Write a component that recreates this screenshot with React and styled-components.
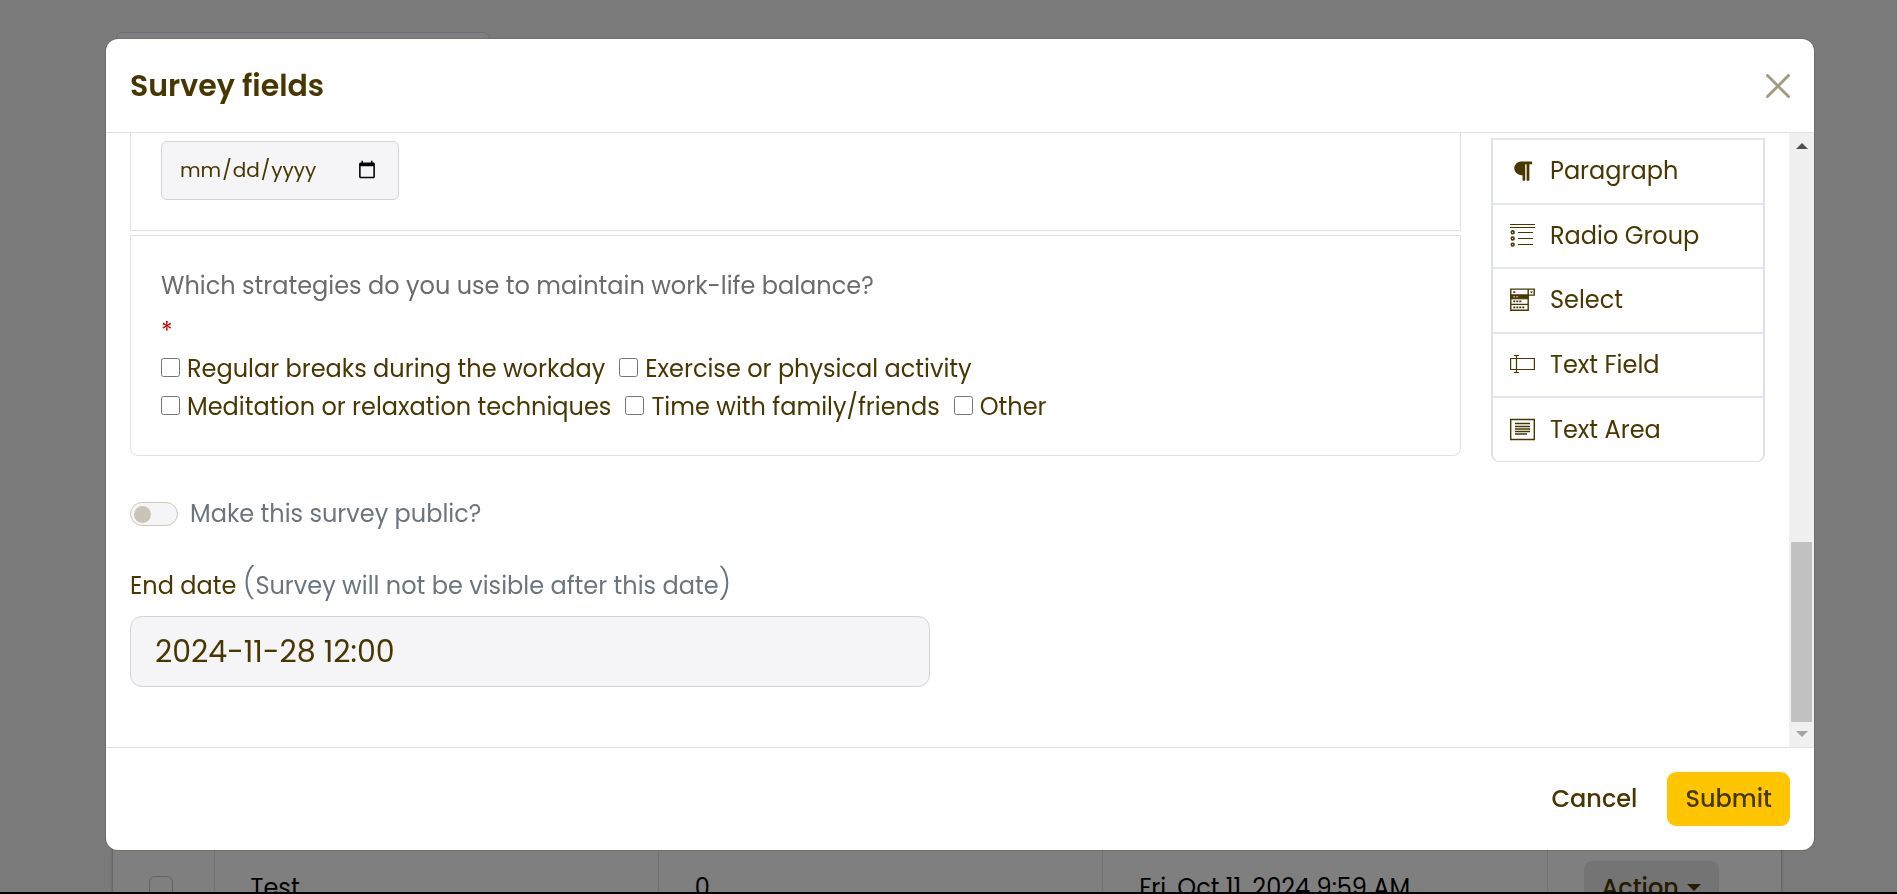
// App.jsx
import React from 'react';
import styled, { createGlobalStyle, css } from 'styled-components';
import { FaParagraph } from 'react-icons/fa';

const GlobalStyle = createGlobalStyle`
  *, *::before, *::after {
    box-sizing: border-box;
  }
  body {
    margin: 0;
    background: #f5f5f5;
    color: #483700;
    font-family: Poppins, Inter, 'Noto Sans', sans-serif;
    font-size: 24px;
    line-height: 36px;
  }
  input, button {
    font: inherit;
    color: inherit;
  }
`;

/* ---- page behind the dialog ---- */

const Page = styled.main`
  display: flex;
  flex-direction: column;
  justify-content: space-between;
  height: 100vh;
  padding: 32px 116px 0 113px;
  overflow: hidden;
`;

const SearchCard = styled.div`
  width: 374px;
  height: 64px;
  margin-left: 3px;
  background: #fff;
  border: 1px solid #dcdfe6;
  border-radius: 6px;
`;

const TableCard = styled.div`
  height: 48px;
  background: #fff;
  box-shadow: 0 0 3px rgba(0, 0, 0, 0.4);
`;

const Table = styled.table`
  width: 100%;
  table-layout: fixed;
  border-collapse: collapse;
  color: #000;
`;

const Cell = styled.td`
  width: ${({ $width }) => $width || 'auto'};
  height: 84px;
  padding: 0 36px;
  border-right: 1px solid #e4e4e4;
  &:last-child {
    border-right: 0;
  }
`;

const RowCheck = styled.input`
  appearance: none;
  display: block;
  width: 24px;
  height: 24px;
  margin: 0;
  border: 1px solid #c8c4b5;
  border-radius: 6px;
`;

const ActionButton = styled.button`
  display: flex;
  align-items: center;
  gap: 8px;
  height: 54px;
  padding: 0 18px;
  background: #e9e9e9;
  border: 0;
  border-radius: 8px;
  color: #483700;
  font-weight: 500;
`;

/* ---- dialog ---- */

const Backdrop = styled.div`
  position: fixed;
  inset: 0;
  display: flex;
  padding: 39px 83px 42px 106px;
  background: rgba(0, 0, 0, 0.5);
  border-bottom: 2px solid #000;
`;

const Dialog = styled.section`
  display: flex;
  flex: 1;
  flex-direction: column;
  min-width: 0;
  overflow: hidden;
  background: #fff;
  border-radius: 12px;
  box-shadow: 0 0 0 1px rgba(72, 55, 0, 0.2);
`;

const Header = styled.header`
  display: flex;
  flex: none;
  align-items: center;
  justify-content: space-between;
  height: 94px;
  padding: 0 24px;
  border-bottom: 1px solid #dee2e6;
`;

const Title = styled.h1`
  margin: 0;
  font-size: 30px;
  font-weight: 600;
`;

const CloseButton = styled.button`
  display: flex;
  padding: 0;
  background: none;
  border: 0;
  color: #a39b7f;
`;

const Body = styled.div`
  display: flex;
  flex: 1;
  min-height: 0;
`;

// Content is pinned to its end, as when scrolled all the way down
const ScrollArea = styled.div`
  display: flex;
  flex: 1;
  flex-direction: column;
  justify-content: flex-end;
  min-width: 0;
  padding: 0 24px 60px;
  overflow: hidden;
`;

const ScrollTrack = styled.div`
  display: flex;
  flex: none;
  flex-direction: column;
  align-items: center;
  justify-content: space-between;
  width: 25px;
  padding: 10px 2px;
  background: #f0f0f0;
`;

const ScrollThumb = styled.div`
  width: 100%;
  height: 180px;
  margin: auto 0 9px;
  background: #c1c1c1;
`;

const Builder = styled.div`
  display: flex;
  flex: none;
  align-items: flex-end;
  gap: 30px;
  margin-bottom: 40px;
`;

const Fields = styled.div`
  display: flex;
  flex: 1;
  flex-direction: column;
  gap: 4px;
  margin-bottom: 6px;
`;

const FieldCard = styled.fieldset`
  margin: 0;
  padding: ${({ $last }) => ($last ? '32px 30px 29px' : '32px 30px 30px')};
  border: 1px solid #dee2e6;
  ${({ $last }) => $last && css`
    border-radius: 0 0 8px 8px;
  `}
`;

const DateInput = styled.input`
  display: block;
  width: 238px;
  height: 59px;
  padding: 0 19px 2px 17px;
  background: #f5f5f8;
  border: 1px solid #ced4da;
  border-radius: 6px;
  font-size: 20px;
`;

const Question = styled.div`
  color: #6b6b6b;
`;

const Required = styled.div`
  height: 46px;
  padding-top: 10px;
  color: #c00;
`;

const Options = styled.div`
  display: flex;
  flex-wrap: wrap;
  max-width: 920px;
  column-gap: 14px;
`;

const Option = styled.label`
  display: flex;
  align-items: center;
  gap: 7px;
  height: 38px;
  input {
    width: 19px;
    height: 19px;
    margin: 0 0 4px;
  }
`;

const Palette = styled.ul`
  display: grid;
  flex: none;
  grid-auto-rows: 1fr;
  width: 274px;
  height: 324px;
  margin: 0;
  padding: 0;
  border: solid #dee2e6;
  border-width: 0 2px 1px;
  border-radius: 0 0 8px 8px;
  list-style: none;
`;

const PaletteItem = styled.li`
  display: flex;
  align-items: center;
  gap: 15px;
  padding: 0 17px;
  border-top: 2px solid #e2e5ea;
  svg {
    flex: none;
    width: 25px;
  }
`;

const SwitchRow = styled.label`
  display: flex;
  flex: none;
  align-items: center;
  gap: 12px;
  height: 24px;
  margin-bottom: 42px;
  color: #6c757d;
`;

const Switch = styled.input`
  appearance: none;
  display: flex;
  align-items: center;
  width: 48px;
  height: 24px;
  margin: 0;
  padding: 0 3px;
  background: #f5f5f8;
  border: 1px solid #cdc8b8;
  border-radius: 12px;
  &::before {
    content: '';
    width: 17px;
    height: 17px;
    background: #c9c4b6;
    border-radius: 50%;
  }
  &:checked {
    justify-content: flex-end;
  }
`;

const EndLabel = styled.label`
  flex: none;
  height: 36px;
  margin-bottom: 12px;
`;

const Muted = styled.span`
  color: #6c757d;
`;

const Paren = styled.span`
  font-size: 30px;
  font-weight: 300;
  line-height: 24px;
`;

const EndInput = styled.input`
  flex: none;
  width: 800px;
  max-width: 100%;
  height: 71px;
  padding: 0 24px;
  background: #f5f5f8;
  border: 1px solid #ced4da;
  border-radius: 12px;
  font-size: 30px;
`;

const Footer = styled.footer`
  display: flex;
  flex: none;
  align-items: center;
  justify-content: flex-end;
  gap: 12px;
  height: 103px;
  padding: 0 24px;
  border-top: 1px solid #dee2e6;
`;

const Button = styled.button`
  height: 54px;
  padding: 0 18px;
  background: ${({ $primary }) => ($primary ? '#ffc600' : 'transparent')};
  border: 0;
  border-radius: 9px;
  font-weight: 500;
`;

const RadioGroupIcon = () => (
  <svg width="25" height="24" viewBox="0 0 25 24" fill="none" stroke="currentColor">
    <path d="M0 .5h25M0 3.5h25M8 8.5h15M8 14.5h15M8 20.5h15" strokeWidth="1.2" />
    <g strokeWidth="1.6">
      <circle cx="2.7" cy="8.3" r="1.4" />
      <circle cx="2.7" cy="14.5" r="1.4" />
      <circle cx="2.7" cy="20.6" r="1.4" />
    </g>
  </svg>
);

const SelectIcon = () => (
  <svg width="25" height="24" viewBox="0 0 25 24" fill="none" stroke="currentColor">
    <path d="M.8 1.1h23.4v6H.8zM.8 7v15.3h17.4V1.1M.8 16.4h17.4" strokeWidth="1.4" />
    <path d="M.8 7h17.4v3.8H.8z" fill="currentColor" />
    <path d="M3.3 4.2h2M3.3 13.4h2m1 0h2m1 0h2M3.3 19.4h2m1 0h2m1 0h2m1 0h2" strokeWidth="1.7" />
    <path d="M3.3 8.8h1.5m1.5 0h1.5" stroke="#fff" />
    <path d="M20 3.5h3l-1.5 2z" fill="currentColor" stroke="none" />
  </svg>
);

const TextFieldIcon = () => (
  <svg width="25" height="24" viewBox="0 0 25 24" fill="none" stroke="currentColor" strokeWidth="1.2">
    <path d="M.6 5.5h23.8v11H.6zM6.5 2.5v17M4 2.5h5M4 19.5h5" />
  </svg>
);

const TextAreaIcon = () => (
  <svg width="25" height="24" viewBox="0 0 25 24" fill="none" stroke="currentColor">
    <path d="M.7 1.5h23.6v20H.7z" strokeWidth="1.4" />
    <path d="M5 5.5h15M5 8.5h15M5 11h15M5 13.5h15M5 16h12" strokeWidth="1.4" />
  </svg>
);

const paletteItems = [
  { label: 'Paragraph', icon: <FaParagraph size={22} /> },
  { label: 'Radio Group', icon: <RadioGroupIcon /> },
  { label: 'Select', icon: <SelectIcon /> },
  { label: 'Text Field', icon: <TextFieldIcon /> },
  { label: 'Text Area', icon: <TextAreaIcon /> },
];

const strategies = [
  'Regular breaks during the workday',
  'Exercise or physical activity',
  'Meditation or relaxation techniques',
  'Time with family/friends',
  'Other',
];

const SurveyTable = () => (
  <Page>
    <SearchCard />
    <TableCard>
      <Table>
        <tbody>
          <tr>
            <Cell $width="101px">
              <RowCheck type="checkbox" aria-label="Select Test" />
            </Cell>
            <Cell>Test</Cell>
            <Cell>0</Cell>
            <Cell>Fri, Oct 11, 2024 9:59 AM</Cell>
            <Cell $width="234px">
              <ActionButton type="button">
                Action
                <svg width="14" height="8" viewBox="0 0 14 8" fill="currentColor">
                  <path d="M0 0h14L7 7z" />
                </svg>
              </ActionButton>
            </Cell>
          </tr>
        </tbody>
      </Table>
    </TableCard>
  </Page>
);

const App = () => (
  <>
    <GlobalStyle />
    <SurveyTable />
    <Backdrop>
      <Dialog role="dialog" aria-labelledby="survey-title">
        <Header>
          <Title id="survey-title">Survey fields</Title>
          <CloseButton type="button" aria-label="Close">
            <svg width="24" height="24" viewBox="0 0 24 24" stroke="currentColor" strokeWidth="3" strokeLinecap="round">
              <path d="M1.5 1.5l21 21M22.5 1.5l-21 21" />
            </svg>
          </CloseButton>
        </Header>

        <Body>
          <ScrollArea>
            <Builder>
              <Fields>
                <FieldCard>
                  <DateInput type="date" aria-label="Date" />
                </FieldCard>
                <FieldCard $last aria-labelledby="strategies">
                  <Question id="strategies">
                    Which strategies do you use to maintain work-life balance?
                  </Question>
                  <Required>*</Required>
                  <Options>
                    {strategies.map((strategy) => (
                      <Option key={strategy}>
                        <input type="checkbox" />
                        {strategy}
                      </Option>
                    ))}
                  </Options>
                </FieldCard>
              </Fields>
              <Palette>
                {paletteItems.map(({ label, icon }) => (
                  <PaletteItem key={label}>
                    {icon}
                    {label}
                  </PaletteItem>
                ))}
              </Palette>
            </Builder>

            <SwitchRow>
              <Switch type="checkbox" role="switch" />
              Make this survey public?
            </SwitchRow>

            <EndLabel htmlFor="end-date">
              End date{' '}
              <Muted>
                <Paren>(</Paren>Survey will not be visible after this date<Paren>)</Paren>
              </Muted>
            </EndLabel>
            <EndInput id="end-date" type="text" defaultValue="2024-11-28 12:00" />
          </ScrollArea>

          <ScrollTrack aria-hidden="true">
            <svg width="12" height="6" viewBox="0 0 12 6" fill="#505050">
              <path d="M0 6l6-6 6 6z" />
            </svg>
            <ScrollThumb />
            <svg width="12" height="6" viewBox="0 0 12 6" fill="#a3a3a3">
              <path d="M0 0h12L6 6z" />
            </svg>
          </ScrollTrack>
        </Body>

        <Footer>
          <Button type="button">Cancel</Button>
          <Button type="submit" $primary>Submit</Button>
        </Footer>
      </Dialog>
    </Backdrop>
  </>
);

export default App;
